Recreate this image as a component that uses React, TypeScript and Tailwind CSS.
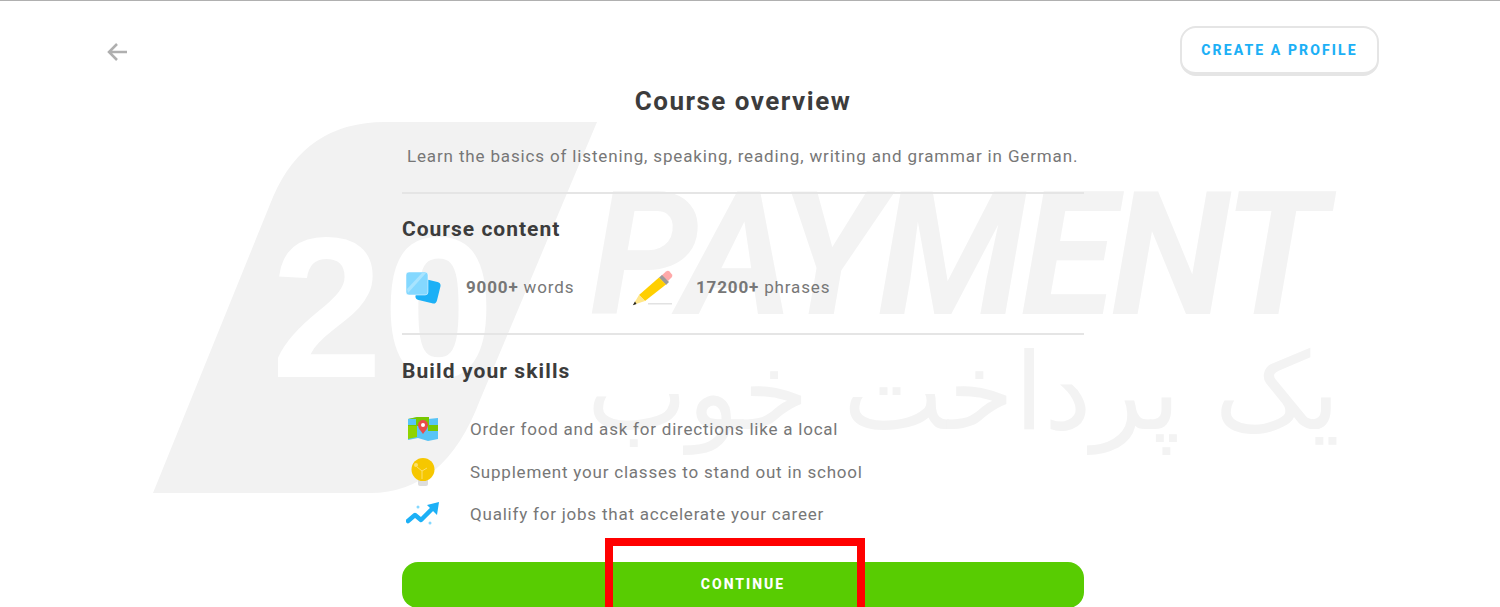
import React from 'react';

const FlashcardsIcon = () => (
  <svg width="36" height="32" viewBox="0 0 36 32" fill="none">
    <rect x="11" y="8" width="22" height="22" rx="4" transform="rotate(14 22 19)" fill="#1cb0f6" />
    <rect x="0" y="0" width="22" height="23" rx="3" fill="#84d8ff" stroke="#ffffff" strokeWidth="0.500" />
    <path d="M1 17 L16 1 H20 L2 21 Z" fill="#a8e4ff" />
  </svg>
);

const PencilIcon = () => (
  <svg width="42" height="36" viewBox="0 0 42 36" fill="none">
    <path d="M29 6 L34 1.5 Q36 0 37.500 1.500 L40 4.500 Q41 6 39.500 7.500 L36 11 Z" fill="#ffa9a9" />
    <path d="M27 7.500 L30 5 L37 12 L34 15 Z" fill="#9a9a9a" />
    <path d="M27 7.500 L34 14.500 L13 31 L7 25 Z" fill="#ffcf00" />
    <path d="M7 25 L13 31 L1 35 Z" fill="#ffe68a" />
    <path d="M3 31.500 L4.500 34 L0.800 35.300 Z" fill="#222222" />
    <rect x="16" y="33" width="24" height="1.500" fill="#e2e2e2" />
  </svg>
);

const MapIcon = () => (
  <svg width="30" height="24" viewBox="0 0 30 24" fill="none">
    <path d="M0 2 L10 0 L20 2 L30 1 V22 L20 24 L10 21 L0 23 Z" fill="#58c4f6" />
    <path d="M9 0 H21 V8 H30 V14 H20 V9 H0 V2 L9 0 Z" fill="#78c800" />
    <path d="M0 9 H9 V20 L0 22 Z" fill="#8fd400" />
    <path d="M0 2 H8 V8 H0 Z" fill="#58c4f6" />
    <path d="M15 17 C12 13 10 11 10 8 A5 5 0 0 1 20 8 C20 11 18 13 15 17 Z" fill="#ea4b4b" />
    <circle cx="15" cy="8" r="2" fill="#ffffff" />
  </svg>
);

const BulbIcon = () => (
  <svg width="24" height="28" viewBox="0 0 24 28" fill="none">
    <rect x="7" y="19" width="10" height="9" rx="2" fill="#dddddd" />
    <circle cx="12" cy="11.500" r="11.500" fill="#f6c700" />
    <path d="M11 21 V13 L16 10 M11 13 L6 9" stroke="#fbdf6e" strokeWidth="1" />
    <circle cx="5" cy="7" r="2" fill="#fbdf6e" />
  </svg>
);

const GrowthIcon = () => (
  <svg width="34" height="24" viewBox="0 0 34 24" fill="none">
    <path d="M2 19 L9 13 L15 18 L26 7" stroke="#1cb0f6" strokeWidth="4.500" strokeLinecap="round" strokeLinejoin="round" />
    <path d="M21 3 L33 0 L31 13 Z" fill="#1cb0f6" />
    <circle cx="12" cy="5" r="1.500" fill="#84d8ff" />
    <circle cx="24" cy="21" r="1.500" fill="#84d8ff" />
  </svg>
);

const Watermark = () => (
  <div className="absolute inset-0 overflow-hidden">
    <svg className="absolute top-0 left-0" width="1500" height="607" viewBox="0 0 1500 607" fill="none">
      <path d="M153 493 L273 197 Q305 122 385 122 L597 122 L480 400 Q445 493 370 493 Z" fill="#f2f2f2" />
    </svg>
    <span className="absolute left-[271px] top-[193px] text-[201px] leading-[230px] font-bold text-white font-['Liberation_Sans',sans-serif]">
      20
    </span>
    <span className="absolute left-[590px] top-[155px] text-[173px] leading-[200px] font-bold italic tracking-[-4px] text-[#f3f3f3] font-['Roboto',sans-serif]">
      PAYMENT
    </span>
    <span dir="rtl" className="absolute left-[593px] top-[322px] w-[747px] text-[107px] leading-[140px] text-[#f3f3f3] whitespace-nowrap font-['DejaVu_Sans',sans-serif]">
      یک پرداخت خوب
    </span>
  </div>
);

const skills = [
  { icon: <MapIcon />, text: 'Order food and ask for directions like a local' },
  { icon: <BulbIcon />, text: 'Supplement your classes to stand out in school' },
  { icon: <GrowthIcon />, text: 'Qualify for jobs that accelerate your career' },
];

export default function App() {
  return (
    <div className="relative h-[607px] overflow-hidden bg-white font-['Roboto',sans-serif]">
      <Watermark />
      <div className="relative">
        <div className="h-px bg-[#b0b0b0]" />

        <div className="flex items-start justify-between pt-[25px] pl-[106px] pr-[121px]">
          <svg className="mt-[15px]" width="22" height="22" viewBox="0 0 22 22" fill="none" stroke="#afafaf" strokeWidth="2.500">
            <path d="M21 11 H3 M11 3 L3 11 L11 19" />
          </svg>
          <button className="w-[199px] h-[50px] rounded-2xl border-2 border-b-4 border-[#e5e5e5] bg-white text-[14px] font-extrabold tracking-[2.1px] text-[#1cb0f6]">
            CREATE A PROFILE
          </button>
        </div>

        <div className="ml-[402px] w-[682px]">
          <h1 className="mt-[10px] text-center text-[26px] leading-[30px] font-bold tracking-[1.5px] text-[#3c3c3c]">Course overview</h1>

          <p className="mt-[28px] pl-[5px] text-[17px] leading-[24px] tracking-[0.85px] text-[#777777]">
            Learn the basics of listening, speaking, reading, writing and grammar in German.
          </p>

          <div className="mt-[24px] h-0.5 bg-[#e5e5e5]" />

          <h2 className="mt-[22px] text-[21px] leading-[26px] font-bold tracking-[1px] text-[#3c3c3c]">Course content</h2>

          <div className="mt-[28px] flex items-center">
            <div className="ml-[4px] w-[60px]"><FlashcardsIcon /></div>
            <p className="-mt-[2px] w-[166px] text-[17px] leading-[24px] tracking-[0.85px] text-[#777777]"><b>9000+</b> words</p>
            <div className="w-[64px]"><PencilIcon /></div>
            <p className="-mt-[2px] text-[17px] leading-[24px] tracking-[0.85px] text-[#777777]"><b>17200+</b> phrases</p>
          </div>

          <div className="mt-[27px] h-0.5 bg-[#e5e5e5]" />

          <h2 className="mt-[23px] text-[21px] leading-[26px] font-bold tracking-[1.1px] text-[#3c3c3c]">Build your skills</h2>

          <ul className="mt-[24px]">
            {skills.map((s) => (
              <li key={s.text} className="flex h-[42.5px] items-center">
                <div className="flex w-[42px] justify-center">{s.icon}</div>
                <span className="ml-[26px] text-[17px] leading-[24px] tracking-[0.78px] text-[#777777]">{s.text}</span>
              </li>
            ))}
          </ul>

          <button className="mt-[26px] h-[46px] w-full rounded-2xl bg-[#58cc02] text-[14px] font-extrabold tracking-[2px] text-white">
            CONTINUE
          </button>
        </div>
      </div>

      <div className="absolute left-[605px] top-[538px] h-[90px] w-[260px] border-8 border-[#ff0000]" />
    </div>
  );
}
